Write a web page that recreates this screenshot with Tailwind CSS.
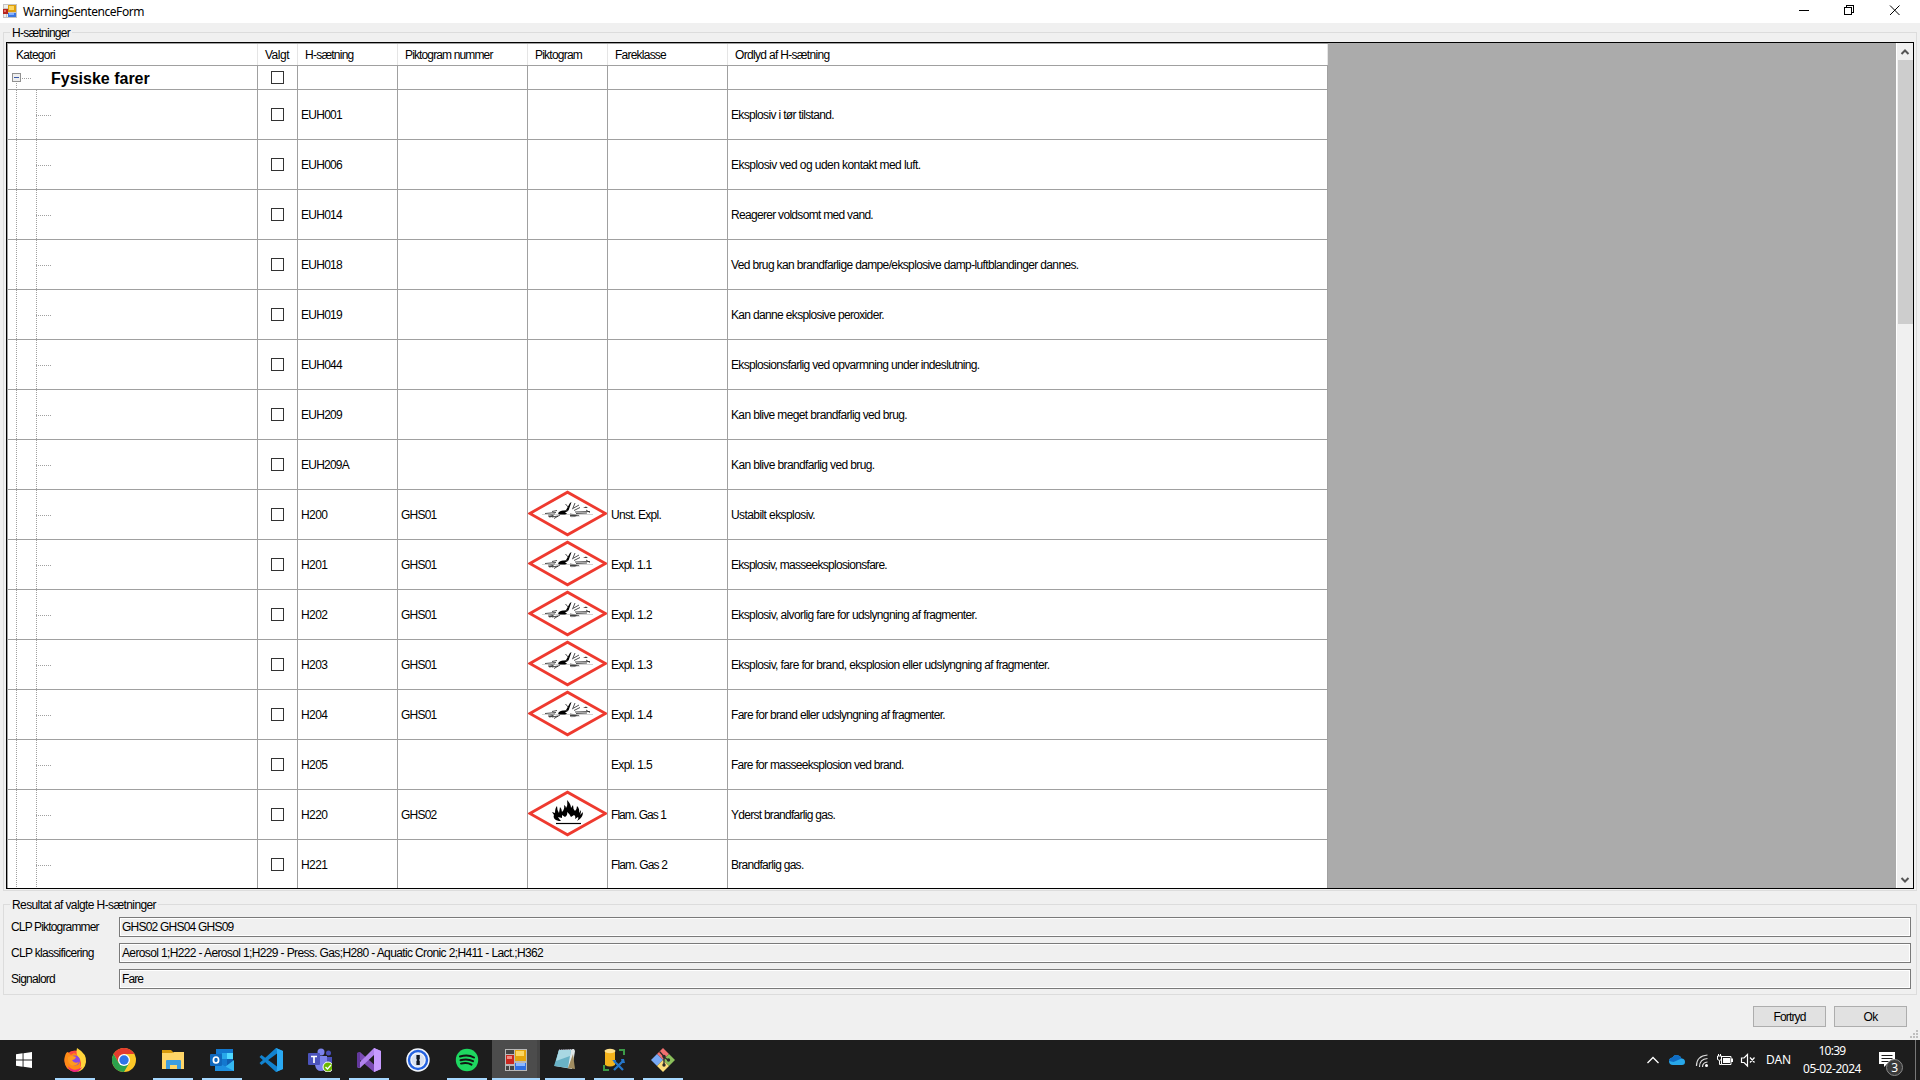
<!DOCTYPE html>
<html lang="da">
<head>
<meta charset="utf-8">
<title>WarningSentenceForm</title>
<script src="https://cdn.jsdelivr.net/npm/@tailwindcss/browser@4"></script>
</head>
<body class="w-[1920px] h-[1080px] overflow-hidden bg-[#f0f0f0] text-black flex flex-col font-['Liberation_Sans',Arial,sans-serif] text-[12px] leading-[14px] tracking-[-0.5px] whitespace-nowrap">

<svg class="hidden">
  <symbol id="ghs01" viewBox="0 0 80 49">
    <path d="M1.8 23.5 39.5 2.2 77.500 23.5 39.5 44.8Z" fill="#fff" stroke="#ee3a2f" stroke-width="2.800"/>
    <path d="M31 22q2-2 5-1.500l3-.5 1 1-3 1.500 2 1-2 1.500-5 0q-3-1-1-3zM38 20l4-7 1.500-1-3 8.500z"/>
    <path d="M37.500 14l3 3.500M44 19l7-4M46 20.500l6-3M47 22l15-.5M48 23.500l11-.5M45 18l2-5M20 25l7-1M17 23.500l11-1M24 27l6-1M24 21.500l5-1M26 28.500l6-3.500M42 24l9 1.500M58 20l4 2.500" stroke="#222" stroke-width=".8" fill="none"/>
    <path d="M55 18l3-1.500 2 1.500zM20 26l5-1 1.500 1.500-5 1zM42 24.500l8 .5-3 2-5-.5z" fill="#444"/>
    <path d="M14 24.500h51M43 27l9-1" stroke="#b5b5b5" stroke-width=".6"/>
  </symbol>
  <symbol id="ghs02" viewBox="0 0 80 49">
    <path d="M1.8 23.5 39.5 2.2 77.500 23.5 39.5 44.800Z" fill="#fff" stroke="#ee3a2f" stroke-width="2.800"/>
    <path d="M31 31C26 30 25 27 26 25L24 22 27 23Q27 18 29 16 29 20 31 23L32 17Q34 19 34 22 37 19 36 15 38 16 38 18 40 15 39 10 43 14 43 18L45 15Q45 19 47 21 49 19 49 16 52 19 51 23L53 20Q53 24 52 25L55 22Q55 28 49 31 51 28 50 27L47 29Q48 26 46 25L43 27Q42 24 39 22 40 25 37 27L34 25Q34 27 34 28L30 27Q31 29 33 31Z"/>
    <path d="M28 33.500h25" stroke="#000" stroke-width="1.200"/>
  </symbol>
  <symbol id="form" viewBox="0 0 24 24">
    <path fill="#b9b9b9" d="M1 1h22v22H1z"/><path fill="#444" d="M2 2h8v4H2zM2 18h3v4H2zM6 18h4v4H6z"/>
    <path fill="#c9281f" d="M2 7h8v9H2z"/><path fill="#f08a80" d="M3 8h5v3H3z"/>
    <path fill="#e4a50c" d="M11 2h11v11H11z"/><path fill="#fbd663" d="M12 3h8v5h-8z"/>
    <path fill="#2f6fe0" d="M11 15h11v7H11z"/><path fill="#8db8ff" d="M12 15h9v3h-9z"/>
  </symbol>
  <symbol id="form-small" viewBox="0 0 16 16">
    <path fill="#c4c4c4" d="M1 0h14v14H1z"/><path fill="#eee" d="M2 1h4v3H2zM2 10h2v3H2zM5 10h2v3H5z"/>
    <path fill="#b8261e" d="M1 5h5v5H1z"/><path fill="#e8746a" d="M2 6h2v2H2z"/>
    <path fill="#dd9f0e" d="M6 1h8v7H6z"/><path fill="#ffd75e" d="M7 2h5v4H7z"/>
    <path fill="#3a76e0" d="M6 9h8v4H6z"/><path fill="#85b0ff" d="M7 9h5v2H7z"/>
  </symbol>
</svg>

<!-- title bar -->
<header class="h-[23px] shrink-0 bg-white flex items-center justify-between">
  <div class="flex items-center pl-[2px]">
    <svg class="w-4 h-4"><use href="#form-small"/></svg>
    <span class="ml-[5px] font-['Noto_Sans',sans-serif] text-[12px]" data-w="121">WarningSentenceForm</span>
  </div>
  <svg class="w-[130px] h-[23px]" viewBox="1790 0 130 23" fill="none" stroke="#000" shape-rendering="crispEdges">
    <path d="M1799 10.5h10M1844.5 7.5h7v7h-7zM1846.500 7v-1.500h7v7h-1.500"/>
    <path d="m1890 5.500 9.500 9.500m0-9.500-9.500 9.500" shape-rendering="auto"/>
  </svg>
</header>

<main class="h-[1017px] shrink-0 flex flex-col pl-[3px] pr-[3px] pt-[9px]">
  <!-- sentence list -->
  <fieldset class="relative shrink-0 h-[859px] w-[1914px] border border-[#dcdcdc] pl-[2px] pt-[9px]">
    <span class="absolute left-[6px] -top-[7px] bg-[#f0f0f0] px-[2px]"><span data-w="58">H-sætninger</span></span>
    <div class="w-[1908px] h-[847px] border border-black bg-[#ababab] flex overflow-hidden">
      <div class="w-[1321px] border-l border-t border-[#a0a0a0] bg-white overflow-hidden shrink-0" id="grid"></div>
      <div class="grow"></div>
      <div class="w-[17px] border-l border-white bg-[#f0f0f0] flex flex-col items-center justify-between">
        <svg class="w-4 h-[17px]" viewBox="0 0 16 17" fill="none" stroke="#555" stroke-width="2"><path d="m4.500 11 3.500-3.500 3.500 3.500"/></svg>
        <div class="w-[15px] h-[264px] bg-[#cdcdcd] mb-auto"></div>
        <svg class="w-4 h-[17px]" viewBox="0 0 16 17" fill="none" stroke="#555" stroke-width="2"><path d="m4.500 7 3.500 3.500 3.500-3.500"/></svg>
      </div>
    </div>
  </fieldset>

  <!-- result -->
  <fieldset class="relative shrink-0 mt-[13px] h-[91px] w-[1914px] border border-[#dcdcdc] pt-[12px] pl-[7px] pr-[5px] flex flex-col gap-[6px]">
    <span class="absolute left-[6px] -top-[7px] bg-[#f0f0f0] px-[2px]"><span data-w="144">Resultat af valgte H-sætninger</span></span>
    <label class="flex h-5 items-center"><span class="w-[108px]"><span data-w="88">CLP Piktogrammer</span></span><span class="grow h-5 border border-[#7a7a7a] p-px"><span class="flex h-4 items-center pl-px bg-[#f0f0f0] outline outline-white"><span data-w="111.500">GHS02 GHS04 GHS09</span></span></span></label>
    <label class="flex h-5 items-center"><span class="w-[108px]"><span data-w="83">CLP klassificering</span></span><span class="grow h-5 border border-[#7a7a7a] p-px"><span class="flex h-4 items-center pl-px bg-[#f0f0f0] outline outline-white"><span data-w="422.500">Aerosol 1;H222 - Aerosol 1;H229 - Press. Gas;H280 - Aquatic Cronic 2;H411 - Lact.;H362</span></span></span></label>
    <label class="flex h-5 items-center"><span class="w-[108px]"><span data-w="44">Signalord</span></span><span class="grow h-5 border border-[#7a7a7a] p-px"><span class="flex h-4 items-center pl-px bg-[#f0f0f0] outline outline-white"><span data-w="21">Fare</span></span></span></label>
  </fieldset>

  <div class="mt-[11px] pr-[10px] flex justify-end gap-2">
    <button class="w-[73px] h-[21px] border border-[#adadad] bg-[#e1e1e1]"><span data-w="32">Fortryd</span></button>
    <button class="w-[73px] h-[21px] border border-[#adadad] bg-[#e1e1e1]"><span data-w="14">Ok</span></button>
  </div>
  <svg class="self-end w-2 h-2 mt-[3px] -mr-px" fill="#bfbfbf"><path d="M6 0h2v2H6zM3 3h2v2H3zM6 3h2v2H6zM0 6h2v2H0zM3 6h2v2H3zM6 6h2v2H6z"/></svg>
</main>

<!-- taskbar -->
<footer class="h-10 shrink-0 bg-[#1d1d1d] text-white flex justify-between">
  <nav class="flex gap-px">
    <div class="w-[50px] h-10 flex items-center pl-4"><svg class="w-4 h-4" viewBox="0 0 16 16" fill="#fff"><path d="M0 2.200 6.600 1.300V7.500H0zM7.500 1.200 16 0V7.500H7.500zM0 8.400H6.600V14.700L0 13.800zM7.500 8.400H16V16L7.500 14.800z"/></svg></div>
    <div class="w-12 h-10 flex flex-col items-center pt-2"><svg class="w-6 h-6 shrink-0" viewBox="0 0 24 24">
      <circle cx="12" cy="13" r="10.500" fill="#ff4a3d"/><path d="M2 8Q3 4 5 4L8 7 11 5Q16 7 17 11V20Q10 26 4 20 0 14 2 8z" fill="#ff8a16"/><path d="M14 0Q24 6 23 14 22 22 14 24 20 19 17 11 12 7 14 0z" fill="#ffd43a"/><path d="M5 18Q11 25 19 19 17 24 11 24 6 23 5 18z" fill="#f0287d"/><circle cx="12" cy="12.500" r="5" fill="#8b45e8"/><path d="M5 9q4-2 8 0-1 3-4 3 2 4 7 2-3 5-8 3-4-3-3-8z" fill="#ff9a20"/></svg><i class="mt-auto w-10 h-0.5 bg-[#a6d8ff]"></i></div>
    <div class="w-12 h-10 flex flex-col items-center pt-2"><svg class="w-6 h-6 shrink-0" viewBox="0 0 24 24">
      <circle cx="12" cy="12" r="12" fill="#fdc727"/><path d="M12 6H22.400A12 12 0 0 0 1.600 6L6.800 15z" fill="#e33b2e"/><path d="M1.600 6A12 12 0 0 0 12 24L17.200 15 6.800 15z" fill="#2ba24c"/><circle cx="12" cy="12" r="6" fill="#fff"/><circle cx="12" cy="12" r="4.700" fill="#2f74e8"/></svg></div>
    <div class="w-12 h-10 flex flex-col items-center pt-2"><svg class="w-6 h-6 shrink-0" viewBox="0 0 24 24">
      <path d="M1 2h9l2 2v3H1z" fill="#d89a0c"/><path d="M1 5h10l2-1h10v17H1z" fill="#ffd567"/><path d="M5 21v-8q0-1 1-1h13q1 0 1 1v8h-4v-4H9v4z" fill="#3d9de0"/></svg><i class="mt-auto w-10 h-0.5 bg-[#a6d8ff]"></i></div>
    <div class="w-12 h-10 flex flex-col items-center pt-2"><svg class="w-6 h-6 shrink-0" viewBox="0 0 24 24">
      <path d="M6 1h17v21H6z" fill="#1378cf"/><path d="M12 5h5v6h-5z" fill="#28a8ea"/><path d="M17 5h6v6h-6z" fill="#50d9ff"/><path d="M17 11h6v6h-6z" fill="#0f5fb4"/><path d="M5 13 15 19 24 12V23H5z" fill="#35b8f1"/><path d="m5 13 19 10H5z" fill="#1e8fe0"/><rect x="0" y="6" width="12" height="12" rx="1" fill="#1068bd"/><ellipse cx="6" cy="12" rx="2.600" ry="3" fill="none" stroke="#fff" stroke-width="1.700"/></svg><i class="mt-auto w-10 h-0.5 bg-[#a6d8ff]"></i></div>
    <div class="w-12 h-10 flex flex-col items-center pt-2"><svg class="w-6 h-6 shrink-0" viewBox="0 0 24 24">
      <path d="M17 0 24 3V21L17 24 0.500 9 2.500 7 18 18.500V5.500L2.500 17 0.500 15z" fill="#1283cf"/><path d="M17 0 24 3V21L17 24Q18 23 18 20V4Q18 1 17 0z" fill="#2aa9f2"/></svg></div>
    <div class="w-12 h-10 flex flex-col items-center pt-2"><svg class="w-6 h-6 shrink-0" viewBox="0 0 24 24">
      <circle cx="20.500" cy="5" r="2.500" fill="#4a50b8"/><circle cx="13" cy="4" r="3.500" fill="#7b83eb"/><path d="M16 9h8v7q-1 5-6 4z" fill="#4a50b8"/><path d="M7 8h12v9q-1 6-6 6-5 0-6-6z" fill="#7b83eb"/><rect y="5" width="12" height="12" rx="1" fill="#4b53bc"/><path d="M3 8.500h6M6 8.500V15" stroke="#fff" stroke-width="1.700"/><circle cx="20" cy="19" r="5" fill="#6bb700" stroke="#fff"/><path d="m17.500 19 2 2 3.500-4" stroke="#fff" stroke-width="1.300" fill="none"/></svg><i class="mt-auto w-10 h-0.5 bg-[#a6d8ff]"></i></div>
    <div class="w-12 h-10 flex flex-col items-center pt-2"><svg class="w-6 h-6 shrink-0" viewBox="0 0 24 24">
      <path d="M0 5 3 4 21 20 17 24 3 12V20L0 19z" fill="#7a4bb5"/><path d="M17 0 24 3V21L17 24V7L3 20 0 19V17z" fill="#b183ee"/><path d="m0 5 3-1v16l-3-1z" fill="#63389c"/><path d="m17 0 7 3v18l-7 3z" fill="#c79bff"/></svg><i class="mt-auto w-10 h-0.5 bg-[#a6d8ff]"></i></div>
    <div class="w-12 h-10 flex flex-col items-center pt-2"><svg class="w-6 h-6 shrink-0" viewBox="0 0 24 24">
      <circle cx="12" cy="12" r="11.700" fill="#f3f6fb"/><circle cx="12" cy="12" r="9" fill="#f3f6fb" stroke="#2462e0" stroke-width="2.400"/><circle cx="12" cy="12" r="6.500" fill="#d7e0f0"/><path d="M10.400 7h3.400v4l-.8 1 .8 1v4h-3.400v-4l.8-1-.8-1z" fill="#101622"/></svg></div>
    <div class="w-12 h-10 flex flex-col items-center pt-2"><svg class="w-6 h-6 shrink-0" viewBox="0 0 24 24">
      <circle cx="12" cy="12" r="11.200" fill="#1ed760"/><path d="M5 8.500q8-2.500 14 1M5.500 12.200q7-2 12.500 1M6 15.600q6-1.600 10.500 1" fill="none" stroke="#121212" stroke-width="2" stroke-linecap="round"/></svg><i class="mt-auto w-10 h-0.5 bg-[#a6d8ff]"></i></div>
    <div class="w-12 h-10 flex flex-col items-center pt-2 bg-[#4c4c4c] border-r-[3px] border-[#444]"><svg class="w-6 h-6 shrink-0 ml-[3px]"><use href="#form"/></svg><i class="mt-auto w-12 ml-[3px] h-0.5 bg-[#a6d8ff]"></i></div>
    <div class="w-12 h-10 flex flex-col items-center pt-2"><svg class="w-6 h-6 shrink-0" viewBox="0 0 24 24">
      <path d="M6 2 21 1 22 3 19 21 2 18z" fill="#dfe7e8"/><path d="M6 2 18 2 15 20 1 18z" fill="#69b2c6"/><path d="M6 2 18 2 17 8 3 13z" fill="#a9d8e3"/><path d="M20 6 22 21 15 20z" fill="#a08c60"/><path d="M6 1.500h14" stroke="#778" stroke-dasharray="1 1"/></svg><i class="mt-auto w-10 h-0.5 bg-[#a6d8ff]"></i></div>
    <div class="w-12 h-10 flex flex-col items-center pt-2"><svg class="w-6 h-6 shrink-0" viewBox="0 0 24 24">
      <path d="M3 3v14q5 3 10 0V3z" fill="#f5b31b"/><ellipse cx="8" cy="3" rx="5.500" ry="2.200" fill="#ffe08a"/><path d="M17 2h5v5M2 17v5h5" fill="none" stroke="#3c9a47" stroke-width="2"/><path d="m12 13 9 9M21 13l-9 9" stroke="#2576c9" stroke-width="2.300"/><path d="m10 12 4 0 0 3zM19 11l3 0 1 4-3 0z" fill="#2576c9"/></svg><i class="mt-auto w-10 h-0.5 bg-[#a6d8ff]"></i></div>
    <div class="w-12 h-10 flex flex-col items-center pt-2"><svg class="w-6 h-6 shrink-0" viewBox="0 0 24 24">
      <path d="m12 0 6 6-6 6-6-6z" fill="#f1706f"/><path d="m6 6 6 6-6 6-6-6z" fill="#78a9f5"/><path d="m18 6 6 6-6 6-6-6z" fill="#8bbf5b"/><path d="m12 12 6 6-6 6-6-6z" fill="#fbdc7a"/><path d="m8.500 3.500 4.500 5v8M13 9l4 3" stroke="#2b2b2b" stroke-width="1.300" fill="none"/><circle cx="13" cy="8.500" r="1.700" fill="#2b2b2b"/><circle cx="17.500" cy="12" r="1.700" fill="#2b2b2b"/><circle cx="13" cy="17" r="1.700" fill="#2b2b2b"/></svg><i class="mt-auto w-10 h-0.5 bg-[#a6d8ff]"></i></div>
  </nav>
  <div class="flex items-center font-['Noto_Sans',sans-serif] leading-[18px]">
    <svg class="w-[116px] h-10" viewBox="1645 1040 116 40" fill="none" stroke="#fff">
      <path d="m1647.500 1063 5.500-5.500 5.500 5.500" stroke-width="1.300"/>
      <path d="M1673 1065q-4 0-4-4 0-3 3.500-3.500 2-3.500 6-2 2 .5 3 3 3.500 0 3.500 3.500 0 3-3 3z" fill="#28a8ea" stroke="none"/><path d="M1669 1061q0-3 3.500-3.500 2-3.500 6-2 2 .5 3 3l-8 3.500z" fill="#0f6cc4" stroke="none"/>
      <g stroke="#ddd" stroke-width="1.200"><path d="M1696.500 1066q0-10 11-11M1699.500 1067q0-8 8-8.500M1702.500 1067q0-4.500 5-5"/></g><circle cx="1706.500" cy="1065.500" r="1.500" fill="#fff" stroke="none"/>
      <path d="M1721.500 1056.500h9.500v8h-9.500zM1717.500 1056v3.500q2 2 4 0V1056zM1718.500 1056v-2M1720.500 1056v-2M1719.500 1061v3.500h2"/><path d="M1723 1058h7v5h-7zM1731 1058.500h2v3.500h-2z" fill="#fff" stroke="none"/>
      <path d="M1741.500 1058v4.500h2.500l3.500 3.500v-11.500l-3.500 3.500zM1750 1057.500l4.500 5M1754.500 1057.500l-4.500 5" stroke-width="1.200"/>
    </svg>
    <span class="w-[31px] pl-[5px] -mt-px"><span data-w="25">DAN</span></span>
    <div class="w-[80px] text-center -mt-px"><span data-w="27">10:39</span><br><span data-w="58">05-02-2024</span></div>
    <svg class="w-[48px] h-10" viewBox="1872 1040 48 40">
      <path d="M1879 1052h16v12h-8l-3 3v-3h-5z" fill="#fff"/><path d="M1881.500 1055.500h11M1881.500 1058.500h11M1881.500 1061.500h7" stroke="#1d1d1d"/>
      <circle cx="1894.500" cy="1067.500" r="8" fill="#3a3a3a" stroke="#8a8a8a"/>
      <text x="1894.500" y="1071.800" fill="#fff" font-size="12" text-anchor="middle">3</text>
      <path d="M1915.500 1040v40" stroke="#777"/>
    </svg>
  </div>
</footer>

<script>
// code, pictogram, class, class width, sentence, sentence width
const rows = [
  ['EUH001','','',0,'Eksplosiv i tør tilstand.',103],
  ['EUH006','','',0,'Eksplosiv ved og uden kontakt med luft.',189.5],
  ['EUH014','','',0,'Reagerer voldsomt med vand.',142],
  ['EUH018','','',0,'Ved brug kan brandfarlige dampe/eksplosive damp-luftblandinger dannes.',347.5],
  ['EUH019','','',0,'Kan danne eksplosive peroxider.',153],
  ['EUH044','','',0,'Eksplosionsfarlig ved opvarmning under indeslutning.',248.5],
  ['EUH209','','',0,'Kan blive meget brandfarlig ved brug.',176],
  ['EUH209A','','',0,'Kan blive brandfarlig ved brug.',143.5],
  ['H200','GHS01','Unst. Expl.',50,'Ustabilt eksplosiv.',84],
  ['H201','GHS01','Expl. 1.1',40.5,'Eksplosiv, masseeksplosionsfare.',156],
  ['H202','GHS01','Expl. 1.2',41,'Eksplosiv, alvorlig fare for udslyngning af fragmenter.',246],
  ['H203','GHS01','Expl. 1.3',41,'Eksplosiv, fare for brand, eksplosion eller udslyngning af fragmenter.',318.5],
  ['H204','GHS01','Expl. 1.4',41,'Fare for brand eller udslyngning af fragmenter.',214],
  ['H205','','Expl. 1.5',41,'Fare for masseeksplosion ved brand.',172.5],
  ['H220','GHS02','Flam. Gas 1',55,'Yderst brandfarlig gas.',104],
  ['H221','','Flam. Gas 2',56,'Brandfarlig gas.',72.5],
];
const cols = 'grid grid-cols-[250px_40px_100px_130px_80px_120px_600px]';
const cell = 'border-r border-b border-[#a0a0a0] flex items-center pl-[3px]';
const box = '<span class="w-[13px] h-[13px] border border-[#333] bg-white"></span>';
const head = [['Kategori',39],['Valgt',24],['H-sætning',48.5],['Piktogram nummer',87.5],['Piktogram',47],['Fareklasse',51],['Ordlyd af H-sætning',94.5]];
let html = `<div class="${cols} h-[22px] border-b border-[#a0a0a0]">` +
  head.map(([h, w]) => `<div class="border-r border-[#e5e5e5] flex items-center pl-[7px] first:pl-2"><span data-w="${w}">${h}</span></div>`).join('') + '</div>';
html += `<div class="${cols} h-6">
  <div class="border-r border-b border-[#a0a0a0] flex items-center">
    <svg class="w-[43px] h-[23px] shrink-0" fill="none" shape-rendering="crispEdges"><rect x="4.500" y="7.500" width="8" height="8" rx="1" fill="#eee" stroke="#919191"/><path d="M6 11.500h5" stroke="#3b5aa8"/><path d="M14 12.500h10M8.500 17v6" stroke="#a0a0a0" stroke-dasharray="1 1"/></svg>
    <b class="text-[16px] tracking-normal leading-5 mt-[3px]">Fysiske farer</b></div>
  <div class="border-r border-b border-[#a0a0a0] flex items-center justify-center">${box}</div>` +
  `<div class="${cell}"></div>`.repeat(5) + '</div>';
for (const [code, ghs, klass, kw, text, tw] of rows) {
  const pic = ghs ? `<svg class="w-20 h-[49px] shrink-0"><use href="#${ghs.toLowerCase()}"/></svg>` : '';
  const cw = {4: 26.5, 6: 41, 7: 48}[code.length];
  html += `<div class="${cols} h-[50px]">
    <div class="border-r border-b border-[#a0a0a0]"><svg class="w-[60px] h-[49px]" fill="none" stroke="#a0a0a0" stroke-dasharray="1 1" shape-rendering="crispEdges"><path d="M8.500 0v49M28.500 0v49M28 25.500h15"/></svg></div>
    <div class="border-r border-b border-[#a0a0a0] flex items-center justify-center">${box}</div>
    <div class="${cell}"><span data-w="${cw}">${code}</span></div>
    <div class="${cell}"><span data-w="35.500">${ghs}</span></div>
    <div class="border-r border-b border-[#a0a0a0] overflow-hidden">${pic}</div>
    <div class="${cell}"><span data-w="${kw}">${klass}</span></div>
    <div class="${cell}"><span data-w="${tw}">${text}</span></div>
  </div>`;
}
document.getElementById('grid').innerHTML = html;

// spread each label over its own width
const ctx = document.createElement('canvas').getContext('2d');
for (const el of document.querySelectorAll('[data-w]')) {
  const text = el.textContent;
  if (!text) continue;
  ctx.font = el.closest('header, footer') ? '12px "Noto Sans"' : '12px "Liberation Sans"';
  el.style.letterSpacing = ((el.dataset.w - ctx.measureText(text).width) / text.length).toFixed(3) + 'px';
}
</script>
</body>
</html>
